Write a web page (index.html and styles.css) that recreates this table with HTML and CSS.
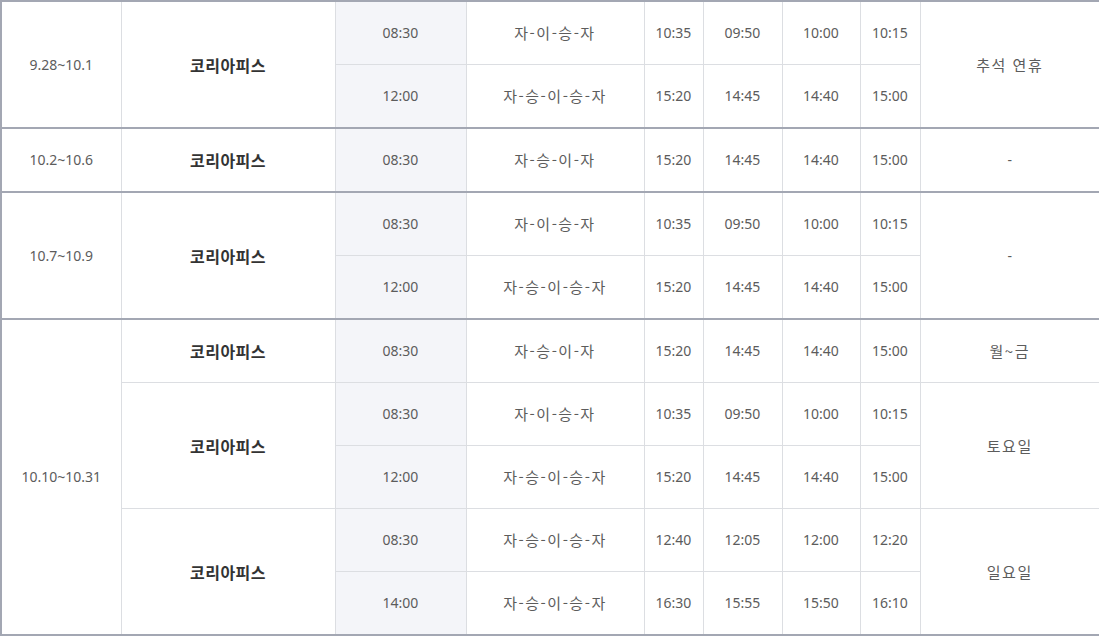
FILE: index.html
```html
<!DOCTYPE html>
<html lang="ko">
<head>
<meta charset="utf-8">
<link rel="stylesheet" href="styles.css">
</head>
<body>
<table class="sched">
  <colgroup>
    <col class="c-date"><col class="c-ship"><col class="c-dep"><col class="c-route">
    <col class="c-t"><col class="c-t2"><col class="c-t3"><col class="c-t4"><col class="c-note">
  </colgroup>
  <tbody class="grp">
    <tr>
      <td rowspan="2">9.28~10.1</td>
      <td rowspan="2" class="ship">코리아피스</td>
      <td class="dep">08:30</td><td class="ko">자-이-승-자</td>
      <td>10:35</td><td>09:50</td><td>10:00</td><td>10:15</td>
      <td rowspan="2" class="ko">추석 연휴</td>
    </tr>
    <tr>
      <td class="dep">12:00</td><td class="ko">자-승-이-승-자</td>
      <td>15:20</td><td>14:45</td><td>14:40</td><td>15:00</td>
    </tr>
  </tbody>
  <tbody class="grp">
    <tr>
      <td>10.2~10.6</td>
      <td class="ship">코리아피스</td>
      <td class="dep">08:30</td><td class="ko">자-승-이-자</td>
      <td>15:20</td><td>14:45</td><td>14:40</td><td>15:00</td>
      <td>-</td>
    </tr>
  </tbody>
  <tbody class="grp">
    <tr>
      <td rowspan="2">10.7~10.9</td>
      <td rowspan="2" class="ship">코리아피스</td>
      <td class="dep">08:30</td><td class="ko">자-이-승-자</td>
      <td>10:35</td><td>09:50</td><td>10:00</td><td>10:15</td>
      <td rowspan="2">-</td>
    </tr>
    <tr>
      <td class="dep">12:00</td><td class="ko">자-승-이-승-자</td>
      <td>15:20</td><td>14:45</td><td>14:40</td><td>15:00</td>
    </tr>
  </tbody>
  <tbody class="grp">
    <tr>
      <td rowspan="5">10.10~10.31</td>
      <td class="ship">코리아피스</td>
      <td class="dep">08:30</td><td class="ko">자-승-이-자</td>
      <td>15:20</td><td>14:45</td><td>14:40</td><td>15:00</td>
      <td class="ko">월~금</td>
    </tr>
    <tr>
      <td rowspan="2" class="ship">코리아피스</td>
      <td class="dep">08:30</td><td class="ko">자-이-승-자</td>
      <td>10:35</td><td>09:50</td><td>10:00</td><td>10:15</td>
      <td rowspan="2" class="ko">토요일</td>
    </tr>
    <tr>
      <td class="dep">12:00</td><td class="ko">자-승-이-승-자</td>
      <td>15:20</td><td>14:45</td><td>14:40</td><td>15:00</td>
    </tr>
    <tr>
      <td rowspan="2" class="ship">코리아피스</td>
      <td class="dep">08:30</td><td class="ko">자-승-이-승-자</td>
      <td>12:40</td><td>12:05</td><td>12:00</td><td>12:20</td>
      <td rowspan="2" class="ko">일요일</td>
    </tr>
    <tr>
      <td class="dep">14:00</td><td class="ko">자-승-이-승-자</td>
      <td>16:30</td><td>15:55</td><td>15:50</td><td>16:10</td>
    </tr>
  </tbody>
</table>
</body>
</html>
```

FILE: styles.css
```css
html, body {
  margin: 0;
  padding: 0;
  background: #ffffff;
}

.sched {
  width: 1099px;
  table-layout: fixed;
  border-collapse: collapse;
  border: 2px solid #a3a7b3;
  font-family: "Noto Sans", "Noto Sans CJK KR", sans-serif;
  font-size: 14px;
  color: #5c5c5c;
}

.c-date { width: 120px; }
.c-ship { width: 214px; }
.c-dep { width: 131px; }
.c-route { width: 178px; }
.c-t { width: 59px; }
.c-t2 { width: 79px; }
.c-t3 { width: 78px; }
.c-t4 { width: 60px; }
.c-note { width: 180px; }

.sched td {
  height: 62px;
  padding: 0;
  border: 1px solid #dcdee2;
  text-align: center;
  vertical-align: middle;
  line-height: 20px;
}

.grp {
  border-top: 2px solid #a3a7b3;
}

.sched td.dep {
  background: #f4f5f9;
}

.sched td.ko {
  font-family: "Noto Sans CJK KR", sans-serif;
  font-size: 15px;
  letter-spacing: 1.5px;
}

.sched td.ship {
  font-family: "Noto Sans CJK KR", sans-serif;
  font-size: 16px;
  font-weight: 700;
  letter-spacing: 0.5px;
  color: #333333;
}
```
